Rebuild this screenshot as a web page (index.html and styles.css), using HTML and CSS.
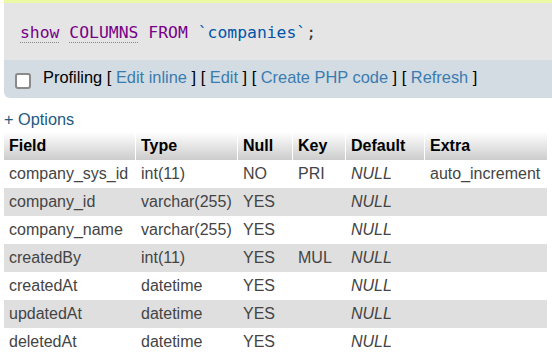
FILE: index.html
```html
<!DOCTYPE html>
<html>
<head>
<meta name="viewport" content="width=device-width, initial-scale=1">
<link rel="stylesheet" href="styles.css">
</head>
<body>

<div class="page">
  <div class="successTail"></div>

  <div class="sqlBox">
    <code class="sql"><span class="kw doc">show</span> <span class="kw doc">COLUMNS</span> <span class="kw">FROM</span> <span class="ident">`companies`</span><span class="punct">;</span></code>
  </div>

  <div class="toolBar">
    <span class="fakeCheck"></span>
    <span class="tools">Profiling [ <a href="#">Edit inline</a> ] [ <a href="#">Edit</a> ] [ <a href="#">Create PHP code</a> ] [ <a href="#">Refresh</a> ]</span>
  </div>

  <div class="optionsLink"><a href="#">+ Options</a></div>

  <table class="resultTable">
    <thead>
      <tr>
        <th class="colField">Field</th>
        <th class="colType">Type</th>
        <th class="colNull">Null</th>
        <th class="colKey">Key</th>
        <th class="colDefault">Default</th>
        <th class="colExtra">Extra</th>
      </tr>
    </thead>
    <tbody>
      <tr class="odd"><td>company_sys_id</td><td>int(11)</td><td>NO</td><td>PRI</td><td class="null">NULL</td><td>auto_increment</td></tr>
      <tr class="even"><td>company_id</td><td>varchar(255)</td><td>YES</td><td></td><td class="null">NULL</td><td></td></tr>
      <tr class="odd"><td>company_name</td><td>varchar(255)</td><td>YES</td><td></td><td class="null">NULL</td><td></td></tr>
      <tr class="even"><td>createdBy</td><td>int(11)</td><td>YES</td><td>MUL</td><td class="null">NULL</td><td></td></tr>
      <tr class="odd"><td>createdAt</td><td>datetime</td><td>YES</td><td></td><td class="null">NULL</td><td></td></tr>
      <tr class="even"><td>updatedAt</td><td>datetime</td><td>YES</td><td></td><td class="null">NULL</td><td></td></tr>
      <tr class="odd"><td>deletedAt</td><td>datetime</td><td>YES</td><td></td><td class="null">NULL</td><td></td></tr>
    </tbody>
  </table>
</div>

</body>
</html>
```

FILE: styles.css
```css
body {
  margin: 0;
  font-family: "Liberation Sans", Arial, sans-serif;
  font-size: 16px;
  color: #444;
  background: #fff;
}

a {
  color: #3a7bb0;
  text-decoration: none;
}

.page {
  padding-left: 4px;
}

.successTail {
  height: 3px;
  background: #ebf8a4;
}

.sqlBox {
  background: #e5e5e5;
  height: 57px;
  padding: 20px 0 0 16px;
  box-sizing: border-box;
}

.sql {
  font-family: "DejaVu Sans Mono", monospace;
  font-size: 16.4px;
  line-height: 19px;
}

.kw {
  color: #770088;
}

.doc {
  border-bottom: 1px dotted #888;
}

.ident {
  color: #0055aa;
}

.punct {
  color: #333;
}

.toolBar {
  background: #d3dce3;
  height: 38px;
  border-bottom-left-radius: 6px;
  display: flex;
  align-items: center;
  padding-left: 11px;
  color: #000;
  font-size: 16.4px;
}

.tools {
  padding-bottom: 3px;
}

.fakeCheck {
  width: 12px;
  height: 12px;
  border: 2px solid #8a8a8a;
  border-radius: 3px;
  background: #fff;
  margin: 4px 12px 0 0;
}

.optionsLink {
  margin-top: 12px;
  line-height: 18px;
  font-size: 16.3px;
}

.optionsLink a {
  color: #235a81;
}

.resultTable {
  margin-top: 4px;
  width: 543px;
  table-layout: fixed;
  border-collapse: separate;
  border-spacing: 0;
}

.resultTable th,
.resultTable td {
  padding: 5px;
  line-height: 18px;
  text-align: left;
  white-space: nowrap;
}

.resultTable th {
  color: #000;
  font-weight: bold;
  background: linear-gradient(#fff, #ccc);
}

.resultTable th + th,
.resultTable td + td {
  border-left: 1px solid transparent;
}

.resultTable th + th {
  border-left-color: #fff;
}

.colField { width: 121px; }
.colType { width: 91px; }
.colNull { width: 44px; }
.colKey { width: 42px; }
.colDefault { width: 68px; }
.colExtra { width: 112px; }

.resultTable tr.odd {
  background: #fff;
}

.resultTable tr.even {
  background: #dfdfdf;
}

.null {
  font-style: italic;
}
```
